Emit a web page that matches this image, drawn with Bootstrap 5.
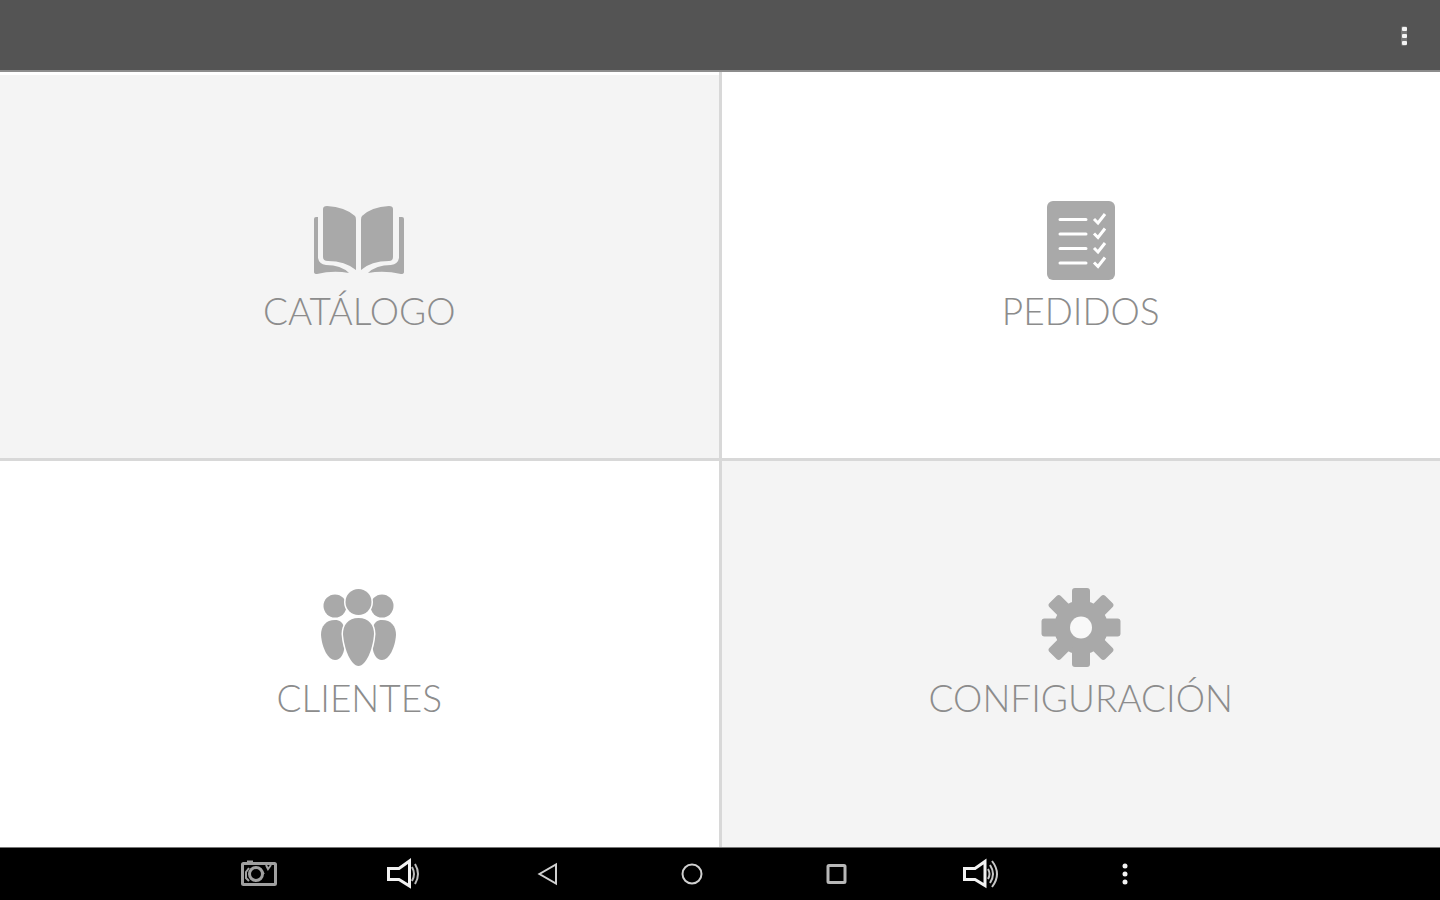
<!DOCTYPE html>
<html lang="es">
<head>
<meta charset="utf-8">
<meta name="viewport" content="width=device-width, initial-scale=1">
<title>Inicio</title>
<link href="https://cdn.jsdelivr.net/npm/bootstrap@5.3.0/dist/css/bootstrap.min.css" rel="stylesheet">
<style>
  body { font-family: Lato, sans-serif; background: #fff; }
  .app-bar { height: 72px; background: #545454; border-bottom: 2px solid #8c8c8c; }
  .icon-btn { background: none; border: 0; padding: 0; color: #f4f4f4; }
  .menu-grid { display: grid; grid-template: 1fr 1fr / 1fr 1fr; gap: 3px; background: #d8d8d8; }
  .tile { color: #a9a9a9; background: #fff; }
  .tile-alt { background: #f4f4f4; }
  .tile-top { border-top: 3px solid #fff; }
  .tile-label { font-size: 37px; line-height: 44px; font-weight: 300; color: #8c8c8c; }
  .system-bar { height: 53px; background: #000; border-top: 1px solid #777; padding-right: 56px; }
  .system-keys { width: 73%; }
  .system-keys .icon-btn { color: #d0d0d0; }
</style>
</head>
<body>
<div class="d-flex flex-column vh-100">
  <header class="app-bar d-flex align-items-center justify-content-end flex-shrink-0 px-4">
    <button class="icon-btn d-flex" type="button" aria-label="Más opciones">
      <svg width="24" height="24" viewBox="0 0 24 24" fill="currentColor"><rect x="9" y="3" width="6" height="20" rx="2" fill="#777"/><rect x="10" y="4" width="5" height="4" rx="1"/><rect x="10" y="11" width="5" height="4" rx="1"/><rect x="10" y="18" width="5" height="4" rx="1"/></svg>
    </button>
  </header>

  <main class="menu-grid flex-grow-1">
    <a href="#catalogo" class="tile tile-alt tile-top d-flex flex-column align-items-center justify-content-center text-decoration-none">
      <svg class="mb-2" width="100" height="80" viewBox="0 0 100 80" fill="currentColor" aria-hidden="true">
        <path d="M14 8Q14 5 18 5Q36 6 46 15Q47 16 47 19V69Q36 60 19 60Q14 60 14 56Z"/>
        <path d="M84 8Q84 5 80 5Q62 6 53 15Q52 16 52 19V69Q62 60 80 60Q84 60 84 56Z"/>
        <path d="M5 18Q5 16 7 16H9V57Q10 63 17 64Q32 64 40 72Q24 69 8 73Q5 73 5 71Z"/>
        <path d="M95 18Q95 16 93 16H90V57Q89 63 82 64Q67 64 59 72Q75 69 92 73Q95 73 95 71Z"/>
      </svg>
      <span class="tile-label">CATÁLOGO</span>
    </a>
    <a href="#pedidos" class="tile tile-top d-flex flex-column align-items-center justify-content-center text-decoration-none">
      <svg class="mb-2" width="80" height="80" viewBox="0 0 80 80" aria-hidden="true">
        <rect x="6" width="68" height="79" rx="6" fill="currentColor"/>
        <g fill="none" stroke="#fff" stroke-width="3">
          <path stroke-width="3" stroke-linecap="round" d="M19 18.500H45M19 33H45M19 47.500H45M19 62H45"/>
          <path d="M53 18L57 22L64 13M53 32.500L57 36.500L64 27.500M53 47L57 51L64 42M53 61.500L57 65.500L64 56.500"/>
        </g>
      </svg>
      <span class="tile-label">PEDIDOS</span>
    </a>
    <a href="#clientes" class="tile d-flex flex-column align-items-center justify-content-center text-decoration-none">
      <svg class="mb-2" width="80" height="80" viewBox="0 0 80 80" fill="currentColor" aria-hidden="true">
        <circle cx="16" cy="18" r="11.500"/><circle cx="63" cy="18" r="11.500"/>
        <path d="M16 32C7 32 2 38 2 47C3 60 9 72 16 72C22 72 26 65 26 53C26 42 26 32 16 32Z"/>
        <path d="M63 32C72 32 77 38 77 47C76 60 70 72 63 72C57 72 53 65 53 53C53 42 53 32 63 32Z"/>
        <g stroke="#fff" stroke-width="3" paint-order="stroke">
          <circle cx="39.500" cy="14" r="13"/>
          <path d="M39.500 30C29 30 24 37 24 46C25 61 32 78 39.500 78C47 78 54 61 55 46C55 37 50 30 39.500 30Z"/>
        </g>
      </svg>
      <span class="tile-label">CLIENTES</span>
    </a>
    <a href="#configuracion" class="tile tile-alt d-flex flex-column align-items-center justify-content-center text-decoration-none">
      <svg class="mb-2" width="80" height="80" viewBox="0 0 80 80" aria-hidden="true">
        <g fill="currentColor">
          <circle cx="40" cy="39.500" r="27"/>
          <rect x="31" y="0" width="18" height="79" rx="3"/>
          <rect x="31" y="0" width="18" height="79" rx="3" transform="rotate(90 40 39.500)"/>
          <rect x="32" y="0" width="16" height="79" rx="3" transform="rotate(45 40 39.500)"/>
          <rect x="32" y="0" width="16" height="79" rx="3" transform="rotate(-45 40 39.500)"/>
        </g>
        <circle cx="40" cy="39.500" r="11" fill="#f8f8f8"/>
      </svg>
      <span class="tile-label">CONFIGURACIÓN</span>
    </a>
  </main>

  <nav class="system-bar d-flex justify-content-center flex-shrink-0" aria-label="Sistema">
    <div class="system-keys d-flex">
      <button class="icon-btn d-flex align-items-center justify-content-center w-100" type="button" aria-label="Captura">
        <svg width="40" height="32" viewBox="0 0 40 32" fill="none" stroke="#a0a0a0" stroke-width="2"><rect x="3.500" y="5.500" width="33" height="21" rx="1" stroke-width="3"/><path d="M8 4H14" stroke-width="3"/><circle cx="17" cy="16" r="6.500" stroke-width="3"/><path d="M10 10L7 14V20L10 23M22 12L25 16M27 7L29 11L32 7"/></svg>
      </button>
      <button class="icon-btn d-flex align-items-center justify-content-center w-100" type="button" aria-label="Bajar volumen">
        <svg width="40" height="32" viewBox="0 0 40 32" fill="none" stroke="#f2f2f2" stroke-width="3"><path d="M5.500 10.500H16L26.500 3V28L16 21.500H5.500Z"/><path d="M29 9Q33 16 29 23M32 6Q38 16 32 26" stroke-width="2" stroke="#bbb"/></svg>
      </button>
      <button class="icon-btn d-flex align-items-center justify-content-center w-100" type="button" aria-label="Atrás">
        <svg width="40" height="32" viewBox="0 0 40 32" fill="none" stroke="currentColor" stroke-width="2"><path d="M28 6.500V25.500L11.500 16Z"/></svg>
      </button>
      <button class="icon-btn d-flex align-items-center justify-content-center w-100" type="button" aria-label="Inicio">
        <svg width="40" height="32" viewBox="0 0 40 32" fill="none" stroke="currentColor" stroke-width="2"><circle cx="20" cy="16" r="9.500"/></svg>
      </button>
      <button class="icon-btn d-flex align-items-center justify-content-center w-100" type="button" aria-label="Recientes">
        <svg width="40" height="32" viewBox="0 0 40 32" fill="none" stroke="#b8b8b8" stroke-width="3"><rect x="12" y="7.500" width="17" height="17" rx="1"/></svg>
      </button>
      <button class="icon-btn d-flex align-items-center justify-content-center w-100" type="button" aria-label="Subir volumen">
        <svg width="40" height="32" viewBox="0 0 40 32" fill="none" stroke="#f2f2f2" stroke-width="3"><path d="M3.500 10.500H14L24 3.500V27.500L14 21.500H3.500Z"/><path d="M27 11Q30 16 27 21M29 7Q35 16 29 25M31 3Q41 16 31 29" stroke-width="2" stroke="#c8c8c8"/></svg>
      </button>
      <button class="icon-btn d-flex align-items-center justify-content-center w-100" type="button" aria-label="Menú">
        <svg width="40" height="32" viewBox="0 0 40 32" fill="#f2f2f2"><circle cx="20" cy="8" r="2.500"/><circle cx="20" cy="16" r="2.500"/><circle cx="20" cy="24" r="2.500"/></svg>
      </button>
    </div>
  </nav>
</div>
<script src="https://cdn.jsdelivr.net/npm/bootstrap@5.3.0/dist/js/bootstrap.bundle.min.js"></script>
</body>
</html>
